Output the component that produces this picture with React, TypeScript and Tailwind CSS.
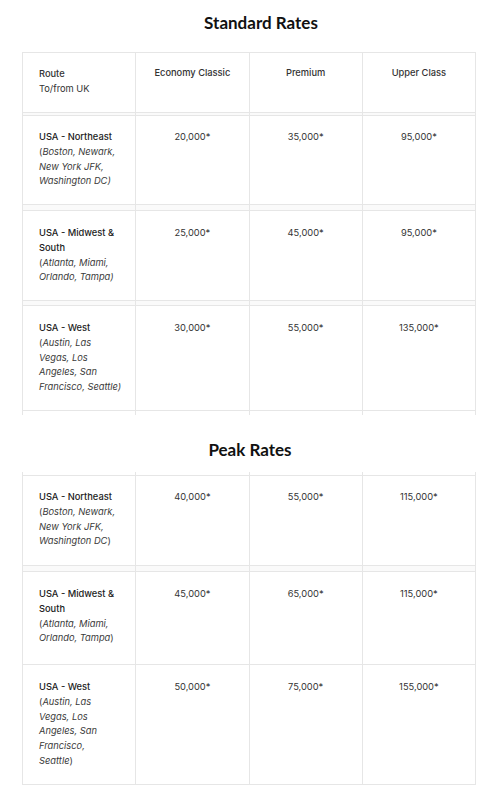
const line = "border-[#e6e6e6]"

type Route = {
  name: string[]
  cities: string[]
  closeUpright?: boolean
  values: string[]
  h: number
  pt: number
}

const standard: Route[] = [
  {
    name: ["USA - Northeast"],
    cities: ["Boston, Newark,", "New York JFK,", "Washington DC"],
    values: ["20,000*", "35,000*", "95,000*"],
    h: 89,
    pt: 14,
  },
  {
    name: ["USA - Midwest &", "South"],
    cities: ["Atlanta, Miami,", "Orlando, Tampa"],
    values: ["25,000*", "45,000*", "95,000*"],
    h: 90,
    pt: 15,
  },
  {
    name: ["USA - West"],
    cities: ["Austin, Las", "Vegas, Los", "Angeles, San", "Francisco, Seattle"],
    values: ["30,000*", "55,000*", "135,000*"],
    h: 105,
    pt: 15,
  },
]

const peak: Route[] = [
  {
    name: ["USA - Northeast"],
    cities: ["Boston, Newark,", "New York JFK,", "Washington DC"],
    closeUpright: true,
    values: ["40,000*", "55,000*", "115,000*"],
    h: 90,
    pt: 14,
  },
  {
    name: ["USA - Midwest &", "South"],
    cities: ["Atlanta, Miami,", "Orlando, Tampa"],
    closeUpright: true,
    values: ["45,000*", "65,000*", "115,000*"],
    h: 93,
    pt: 15,
  },
  {
    name: ["USA - West"],
    cities: ["Austin, Las", "Vegas, Los", "Angeles, San", "Francisco,", "Seattle"],
    closeUpright: true,
    values: ["50,000*", "75,000*", "155,000*"],
    h: 120,
    pt: 15,
  },
]

function Band({ h, top = true, fill = true }: { h: number; top?: boolean; fill?: boolean }) {
  return (
    <div
      className={`grid grid-cols-4 border-r ${line} ${top ? "border-t" : ""} ${fill ? "bg-[#fafafa]" : ""}`}
      style={{ height: h }}
    >
      {[0, 1, 2, 3].map((i) => (
        <div key={i} className={`border-l ${line}`} />
      ))}
    </div>
  )
}

function RouteRow({ r }: { r: Route }) {
  const last = r.cities.length - 1
  return (
    <div
      className={`grid grid-cols-4 border-t border-r ${line} leading-[14.8px] text-[9.3px]`}
      style={{ height: r.h }}
    >
      <div className={`border-l ${line} pl-[16px] pr-2`} style={{ paddingTop: r.pt }}>
        {r.name.map((n) => (
          <div key={n} className="font-medium text-[#222]">
            {n}
          </div>
        ))}
        {r.cities.map((c, i) => (
          <div key={c} className="text-[#3a3a3a] whitespace-nowrap">
            {i === 0 && <span>(</span>}
            <span className="italic">
              {c}
              {i === last && !r.closeUpright && ")"}
            </span>
            {i === last && r.closeUpright && <span>)</span>}
          </div>
        ))}
      </div>
      {r.values.map((v, i) => (
        <div
          key={i}
          className={`border-l ${line} text-center text-[#333]`}
          style={{ paddingTop: r.pt }}
        >
          {v}
        </div>
      ))}
    </div>
  )
}

export default function App() {
  return (
    <div className="w-[500px] h-[805px] bg-white font-['Inter','Liberation_Sans',sans-serif] pt-[11px]">
      <h2 className="pl-[22px] text-center text-[17px] leading-[24px] font-bold text-[#111] font-['Lato',sans-serif]">
        Standard Rates
      </h2>

      <div className="ml-[22px] w-[454px] mt-[17px]">
        <div
          className={`grid grid-cols-4 border-t border-r ${line} leading-[14.8px] text-[9.3px] text-[#333]`}
          style={{ height: 60 }}
        >
          <div className={`border-l ${line} pl-[16px] pt-[14px]`}>
            <div className="font-medium">Route</div>
            <div>To/from UK</div>
          </div>
          {["Economy Classic", "Premium", "Upper Class"].map((h) => (
            <div key={h} className={`border-l ${line} text-center pt-[13px] font-medium`}>
              {h}
            </div>
          ))}
        </div>
        <Band h={3} />
        <RouteRow r={standard[0]} />
        <Band h={6} />
        <RouteRow r={standard[1]} />
        <Band h={5} />
        <RouteRow r={standard[2]} />
        <Band h={5} fill={false} />
      </div>

      <h2 className="mt-[23px] text-center text-[17px] leading-[24px] font-bold text-[#111] font-['Lato',sans-serif]">
        Peak Rates
      </h2>

      <div className="ml-[22px] w-[454px] mt-[10px]">
        <Band h={3} top={false} fill={false} />
        <RouteRow r={peak[0]} />
        <Band h={6} />
        <RouteRow r={peak[1]} />
        <RouteRow r={peak[2]} />
        <div className={`border-t ${line}`} />
      </div>
    </div>
  )
}
